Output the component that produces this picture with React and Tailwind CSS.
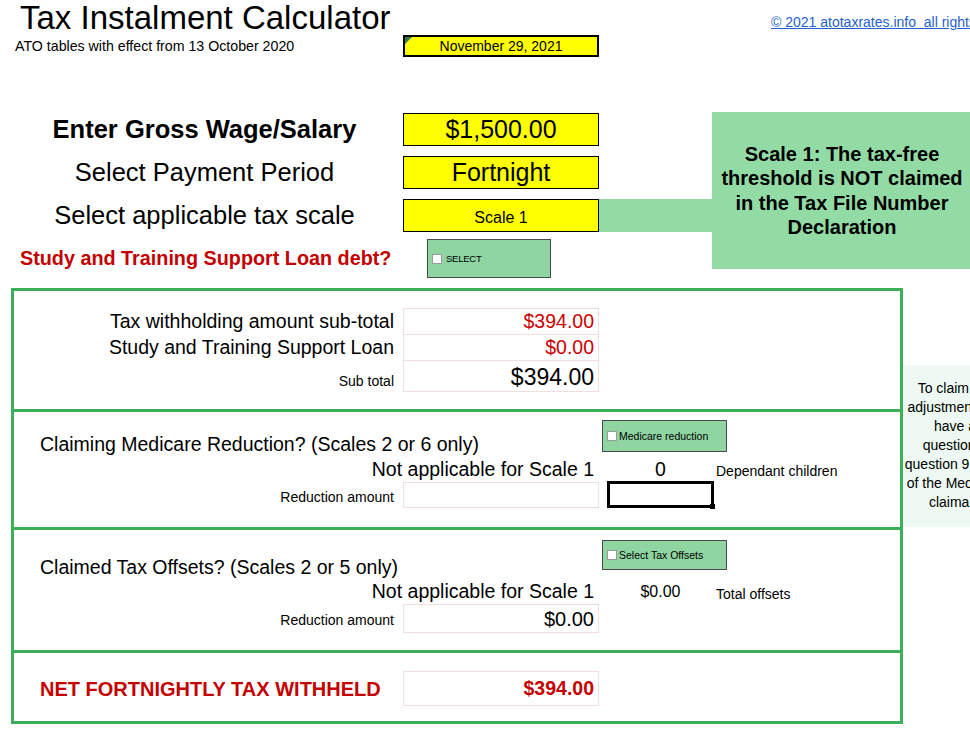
import React from 'react';

function CheckButton({ label, className = '', textClass = 'text-[10.5px]' }) {
    return (
        <div className={`bg-[#8fd5a1] border border-[#4a4a4a] flex items-center pl-[4px] gap-[2px] ${className}`}>
            <span className="w-[10px] h-[10px] bg-white border border-[#9a9a9a] shrink-0" />
            <span className={`${textClass} leading-none text-black whitespace-nowrap`}>{label}</span>
        </div>
    );
}

function Cell({ children, className = '' }) {
    return (
        <div className={`w-[196px] border border-[#f1dfdf] flex items-center justify-end pr-[4px] ${className}`}>
            {children}
        </div>
    );
}

export default function App() {
    return (
        <div className="w-[970px] h-[730px] overflow-hidden bg-white text-black font-['Liberation_Sans',Arial,sans-serif]">
            {/* Header */}
            <div className="flex h-[60px]">
                <div className="w-[403px] pl-[15px] shrink-0">
                    <div className="pl-[5px] text-[33px] leading-[36px] whitespace-nowrap">Tax Instalment Calculator</div>
                    <div className="text-[14.2px] leading-[16px] mt-[2px] whitespace-nowrap">ATO tables with effect from 13 October 2020</div>
                </div>
                <div className="relative mt-[35px] w-[196px] h-[22px] shrink-0 bg-[#ffff00] border-2 border-black flex items-center justify-center text-[14px]">
                    <svg className="absolute top-0 left-0" width="7" height="7" viewBox="0 0 7 7">
                        <polygon points="0,0 7,0 0,7" fill="#2f7d4b" />
                    </svg>
                    November 29, 2021
                </div>
                <a href="#" className="ml-[172px] mt-[14px] text-[14px] leading-[16px] text-[#1f5fcf] underline whitespace-nowrap">
                    © 2021 atotaxrates.info&nbsp; all rights reserved
                </a>
            </div>

            {/* Inputs */}
            <div className="flex mt-[52px]">
                <div className="w-[712px] shrink-0 pt-[1px]">
                    <div className="flex flex-col gap-[10px]">
                        <div className="flex h-[33px]">
                            <div className="w-[403px] pl-[6px] flex items-center justify-center text-[25.5px] font-bold">Enter Gross Wage/Salary</div>
                            <div className="w-[196px] bg-[#ffff00] border border-black flex items-center justify-center text-[25px]">$1,500.00</div>
                        </div>
                        <div className="flex h-[33px]">
                            <div className="w-[403px] pl-[6px] flex items-center justify-center text-[25.5px]">Select Payment Period</div>
                            <div className="w-[196px] bg-[#ffff00] border border-black flex items-center justify-center text-[25px]">Fortnight</div>
                        </div>
                        <div className="flex h-[33px]">
                            <div className="w-[403px] pl-[6px] flex items-center justify-center text-[25.5px]">Select applicable tax scale</div>
                            <div className="w-[196px] bg-[#ffff00] border border-black flex items-center justify-center pt-[5px] text-[16px]">Scale 1</div>
                            <div className="w-[113px] bg-[#92dba5]" />
                        </div>
                    </div>
                    <div className="flex h-[39px] mt-[7px]">
                        <div className="w-[403px] pl-[20px] flex items-center text-[19.8px] font-bold text-[#c40000] whitespace-nowrap">
                            Study and Training Support Loan debt?
                        </div>
                        <CheckButton label="SELECT" className="ml-[24px] w-[124px] h-[39px] gap-[4px]" textClass="text-[9.5px] tracking-tight" />
                    </div>
                </div>
                <div className="w-[260px] h-[157px] shrink-0 bg-[#92dba5] flex items-center justify-center text-center font-bold text-[20px] leading-[24.5px]">
                    Scale 1: The tax-free<br />threshold is NOT claimed<br />in the Tax File Number<br />Declaration
                </div>
            </div>

            {/* Results */}
            <div className="flex items-start mt-[10px]">
                <div className="ml-[11px] w-[892px] shrink-0 border-[3px] border-[#3daf5b]">
                    {/* Sub totals */}
                    <div className="h-[118px] pt-[17px]">
                        <div className="flex h-[27px]">
                            <div className="w-[389px] pr-[9px] flex items-center justify-end text-[19.5px]">Tax withholding amount sub-total</div>
                            <Cell className="text-[19.5px] text-[#cc0000]">$394.00</Cell>
                        </div>
                        <div className="flex h-[26px]">
                            <div className="w-[389px] pr-[9px] flex items-center justify-end text-[19.5px]">Study and Training Support Loan</div>
                            <Cell className="-mt-px text-[19.5px] text-[#cc0000]">$0.00</Cell>
                        </div>
                        <div className="flex h-[31px]">
                            <div className="w-[389px] pr-[9px] flex items-center justify-end pt-[9px] text-[14px]">Sub total</div>
                            <Cell className="-mt-px pt-[2px] text-[23px]">$394.00</Cell>
                        </div>
                    </div>

                    {/* Medicare */}
                    <div className="h-[118px] border-t-[3px] border-[#3daf5b]">
                        <div className="flex h-[44px]">
                            <div className="w-[588px] pl-[26px] pt-[21px] text-[19.5px] leading-[22px] whitespace-nowrap">Claiming Medicare Reduction? (Scales 2 or 6 only)</div>
                            <CheckButton label="Medicare reduction" className="mt-[8px] w-[125px] h-[32px]" />
                        </div>
                        <div className="flex h-[25px] items-center pt-[2px]">
                            <div className="w-[580px] text-right text-[19.5px]">Not applicable for Scale 1</div>
                            <div className="ml-[13px] w-[107px] text-center text-[19.5px]">0</div>
                            <div className="ml-[2px] pt-[3px] text-[14px] whitespace-nowrap">Dependant children</div>
                        </div>
                        <div className="flex items-center">
                            <div className="w-[389px] pr-[9px] pt-[5px] text-right text-[14px]">Reduction amount</div>
                            <Cell className="h-[26px] mt-px" />
                            <div className="relative ml-[8px] w-[107px] h-[27px] border-[3px] border-black">
                                <span className="absolute -right-[4px] -bottom-[4px] w-[5px] h-[5px] bg-black" />
                            </div>
                        </div>
                    </div>

                    {/* Tax offsets */}
                    <div className="h-[123px] border-t-[3px] border-[#3daf5b]">
                        <div className="flex h-[48px]">
                            <div className="w-[588px] pl-[26px] pt-[26px] text-[19.5px] leading-[22px] whitespace-nowrap">Claimed Tax Offsets? (Scales 2 or 5 only)</div>
                            <CheckButton label="Select Tax Offsets" className="mt-[10px] w-[125px] h-[30px]" />
                        </div>
                        <div className="flex h-[26px] items-center pt-[2px]">
                            <div className="w-[580px] text-right text-[19.5px]">Not applicable for Scale 1</div>
                            <div className="ml-[13px] w-[107px] text-center text-[16px]">$0.00</div>
                            <div className="ml-[2px] pt-[4px] text-[14px] whitespace-nowrap">Total offsets</div>
                        </div>
                        <div className="flex items-center">
                            <div className="w-[389px] pr-[9px] pt-[4px] text-right text-[14px]">Reduction amount</div>
                            <Cell className="h-[29px] text-[20px]">$0.00</Cell>
                        </div>
                    </div>

                    {/* Net */}
                    <div className="h-[71px] border-t-[3px] border-[#3daf5b] pt-[18px] flex items-start">
                        <div className="w-[389px] h-[35px] pl-[26px] flex items-center text-[20px] font-bold text-[#c40000] whitespace-nowrap">
                            NET FORTNIGHTLY TAX WITHHELD
                        </div>
                        <Cell className="h-[35px] text-[19.5px] font-bold text-[#c40000]">$394.00</Cell>
                    </div>
                </div>

                <div className="mt-[77px] w-[104px] h-[162px] shrink-0 bg-[#edf9f2] pt-[14px] text-center text-[14px] leading-[19px] whitespace-nowrap">
                    To claim the<br />adjustment you<br />have a<br />question 8<br />question 9 or 10<br />of the Medicare<br />claimant
                </div>
            </div>
        </div>
    );
}
